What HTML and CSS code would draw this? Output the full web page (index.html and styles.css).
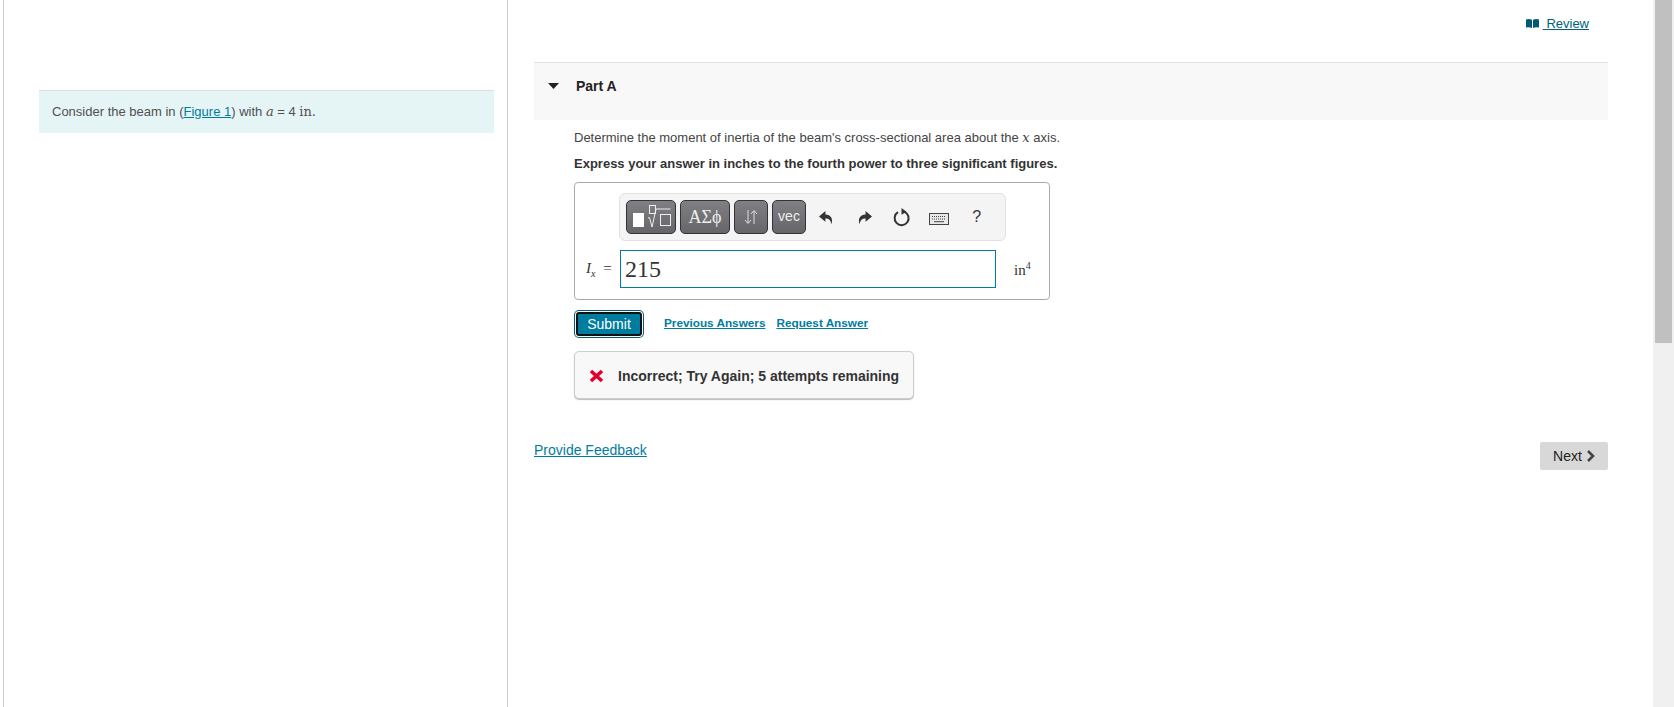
FILE: index.html
```html
<!DOCTYPE html>
<html>
<head>
	<title>Part A</title>
	<link rel="stylesheet" href="styles.css">
</head>
<body>
	<div id="page">
		<div id="intro">
			<div id="intro-box">Consider the beam in (<a href="#">Figure 1</a>) with <i class="math">a</i> = 4 <span class="math">in.</span></div>
		</div>
		<div id="main">
			<div id="review-row">
				<a id="review" href="#">
					<svg width="13" height="9" viewBox="0 0 13 9"><path d="M0 .5Q3 -.5 6 .8V9Q3 7.800 0 8.500zM7 .8Q10 -.5 13 .5V8.500Q10 7.800 7 9z" fill="#005a76"/></svg>
					<span>Review</span>
				</a>
			</div>
			<div id="part-head">
				<svg width="11" height="6" viewBox="0 0 11 6"><path d="M0 0h11L5.500 6z" fill="#222"/></svg>
				<span>Part A</span>
			</div>
			<div id="part-body">
				<p class="question">Determine the moment of inertia of the beam's cross-sectional area about the <i class="math">x</i> axis.</p>
				<p class="question strong">Express your answer in inches to the fourth power to three significant figures.</p>
				<div id="answer">
					<div id="toolbar">
						<button class="tool tool-wide" type="button">
							<svg width="48" height="32" viewBox="0 0 48 32">
								<rect x="6" y="12" width="11" height="14" fill="#fff"/>
								<rect x="22.500" y="4.500" width="6" height="8" fill="none" stroke="#eee"/>
								<path d="M21 17l1.500-.5 2.500 9.500 4-18h14.500" fill="none" stroke="#eee"/>
								<rect x="33.500" y="13.500" width="10" height="11" fill="none" stroke="#eee"/>
							</svg>
						</button>
						<button class="tool tool-greek" type="button">ΑΣϕ</button>
						<button class="tool tool-small" type="button">
							<svg width="14" height="16" viewBox="0 0 14 16"><path d="M4 1v13M1 11l3 3.500 3-3.500M10 15V2M7 5l3-3.500L13 5" fill="none" stroke="#ddd"/></svg>
						</button>
						<button class="tool tool-small tool-vec" type="button">vec</button>
						<span class="glyph">
							<svg width="15" height="15" viewBox="0 0 14 14"><path d="M6 1L0 6l6 5V8c3 0 5 1 5.500 5.500C13.500 8 11 4.500 6 4.200z" fill="#333"/></svg>
						</span>
						<span class="glyph">
							<svg width="15" height="15" viewBox="0 0 14 14"><path d="M8 1l6 5-6 5V8c-3 0-5 1-5.500 5.500C.5 8 3 4.500 8 4.200z" fill="#333"/></svg>
						</span>
						<span class="glyph">
							<svg width="18" height="20" viewBox="0 0 18 20"><path d="M11.500 4.800A7 7 0 1 1 5 5.200" fill="none" stroke="#333" stroke-width="2"/><path d="M8.500 1l5 3.700-5 3z" fill="#333"/></svg>
						</span>
						<span class="glyph glyph-low">
							<svg width="20" height="12" viewBox="0 0 20 12"><rect x=".5" y=".5" width="19" height="11" fill="#e8e8e8" stroke="#444"/><path d="M3 3.500h14M3 6h14" stroke="#444" stroke-dasharray="1 1"/><path d="M5 8.700h10" stroke="#444"/></svg>
						</span>
						<span class="glyph help">?</span>
					</div>
					<div id="entry">
						<span id="entry-label"><i class="var">I<sub>x</sub></i> =</span>
						<div id="entry-input">215</div>
						<span id="entry-unit">in<sup>4</sup></span>
					</div>
				</div>
				<div id="actions">
					<button id="submit" type="button">Submit</button>
					<a href="#">Previous Answers</a>
					<a href="#">Request Answer</a>
				</div>
				<div id="feedback">
					<svg width="15" height="14" viewBox="0 0 15 14"><path d="M2 2l11 10M13 2L2 12" stroke="#e0002b" stroke-width="3.600"/></svg>
					<span>Incorrect; Try Again; 5 attempts remaining</span>
				</div>
			</div>
			<div id="foot">
				<a id="provide" href="#">Provide Feedback</a>
				<button id="next" type="button">Next
					<svg width="9" height="12" viewBox="0 0 9 12"><path d="M2 1l5 5-5 5" fill="none" stroke="#444" stroke-width="2.600"/></svg>
				</button>
			</div>
		</div>
		<div id="scrollbar"><div id="thumb"></div></div>
	</div>
</body>
</html>
```

FILE: styles.css
```css
*{
	box-sizing: border-box;
}

html, body{
	background-color: #fff;
	color: #333;
	font-family: "Liberation Sans", Arial, sans-serif;
	font-size: 13px;
	width: 100%;
	height: 100%;
	margin: 0px;
	overflow: hidden;
}

a{
	color: #007c9e;
}

#page{
	display: flex;
	height: 707px;
	padding-left: 3px;
}

#intro{
	flex: 0 0 505px;
	border-left: 1px solid #ccc;
	border-right: 1px solid #ccc;
	padding: 90px 13px 0 35px;
}

#intro-box{
	height: 43px;
	line-height: 41px;
	padding-left: 13px;
	background-color: #e5f5f6;
	border-top: 1px solid #dcdfe0;
	color: #505050;
}

.math{
	font-family: "DejaVu Serif", serif;
	font-size: 13px;
}

#main{
	flex: 1;
	padding: 0 45px 0 26px;
}

#review-row{
	display: flex;
	justify-content: flex-end;
	height: 62px;
	padding: 16px 19px 0 0;
}

#review{
	color: #005f7d;
	height: 16px;
	line-height: 16px;
}

#review svg{
	margin-right: 4px;
}

#part-head{
	display: flex;
	align-items: flex-start;
	height: 58px;
	padding: 14px 0 0 14px;
	gap: 17px;
	background-color: #f8f8f8;
	border-top: 1px solid #e4e4e4;
	font-weight: bold;
	font-size: 14px;
	line-height: 18px;
	color: #222;
}

#part-head svg{
	margin-top: 6px;
}

#part-body{
	padding: 11px 0 0 40px;
}

.question{
	margin: 0 0 12px 0;
	line-height: 14px;
	color: #444;
}

.strong{
	font-weight: bold;
	color: #333;
	margin-bottom: 11px;
}

#answer{
	width: 476px;
	height: 118px;
	border: 1px solid #aaa;
	border-radius: 4px;
	padding: 10px 0 0 44px;
}

#toolbar{
	display: flex;
	align-items: flex-start;
	width: 387px;
	height: 48px;
	padding: 6px 0 0 6px;
	gap: 4px;
	background-color: #f4f4f4;
	border: 1px solid #e2e2e2;
	border-radius: 6px;
}

.tool{
	flex: none;
	display: flex;
	align-items: center;
	justify-content: center;
	height: 34px;
	padding: 0;
	color: #eee;
	background: linear-gradient(#808084, #66666a);
	border: 1px solid #333;
	border-radius: 5px;
}

.tool-wide{
	width: 50px;
}

.tool-greek{
	width: 50px;
	font-family: "Liberation Serif", serif;
	font-size: 18px;
}

.tool-small{
	width: 34px;
}

.tool-vec{
	font-family: "Liberation Sans", sans-serif;
	font-size: 14px;
	align-items: flex-start;
	padding-top: 7px;
}

.glyph{
	flex: none;
	display: flex;
	align-items: center;
	justify-content: center;
	width: 33.500px;
	height: 34px;
}

.glyph-low{
	padding-top: 3px;
}

.help{
	font-size: 16px;
	color: #333;
}

#entry{
	display: flex;
	align-items: center;
	height: 38px;
	margin-top: 9px;
	margin-left: -33px;
}

#entry-label{
	width: 34px;
	font-family: "Liberation Serif", serif;
	font-size: 15px;
	white-space: nowrap;
}

.var sub{
	font-size: 10px;
	margin-right: 4px;
}

#entry-input{
	width: 376px;
	height: 38px;
	line-height: 36px;
	padding-left: 4px;
	border: 1px solid #007c9e;
	font-family: "Liberation Serif", serif;
	font-size: 24px;
}

#entry-unit{
	margin-left: 18px;
	font-family: "Liberation Serif", serif;
	font-size: 15px;
}

#entry-unit sup{
	font-size: 10px;
}

#actions{
	display: flex;
	align-items: center;
	height: 28px;
	margin-top: 10px;
	gap: 11px;
	font-weight: bold;
	font-size: 11.750px;
}

#actions a{
	margin-top: -4px;
}

#submit{
	width: 66px;
	height: 24px;
	margin: 2px 11px 2px 2px;
	padding: 0;
	color: #fff;
	background-color: #007c9e;
	border: 2px solid #111;
	border-radius: 3px;
	box-shadow: 0 0 0 1px #fff, 0 0 0 2px #005a76;
	font-family: "Liberation Sans", sans-serif;
	font-size: 14px;
}

#feedback{
	display: flex;
	align-items: center;
	width: 340px;
	height: 48px;
	margin-top: 13px;
	padding: 1px 0 0 14px;
	gap: 14px;
	background-color: #f8f8f8;
	border: 1px solid #ccc;
	border-radius: 5px;
	box-shadow: 0 1px 1px #bbb;
	color: #333;
	font-weight: bold;
	font-size: 14px;
}

#foot{
	display: flex;
	justify-content: space-between;
	align-items: flex-start;
	margin-top: 42px;
}

#provide{
	font-size: 14px;
	line-height: 18px;
}

#next{
	display: flex;
	align-items: center;
	justify-content: center;
	gap: 4px;
	width: 68px;
	height: 28px;
	margin-top: 1px;
	padding: 0;
	color: #222;
	background-color: #d8d8d8;
	border: none;
	border-radius: 2px;
	font-family: "Liberation Sans", sans-serif;
	font-size: 14px;
}

#scrollbar{
	flex: 0 0 21px;
	padding: 0 2px;
	background-color: #f0f0f0;
}

#thumb{
	height: 343px;
	background-color: #c0c0c0;
}
```
